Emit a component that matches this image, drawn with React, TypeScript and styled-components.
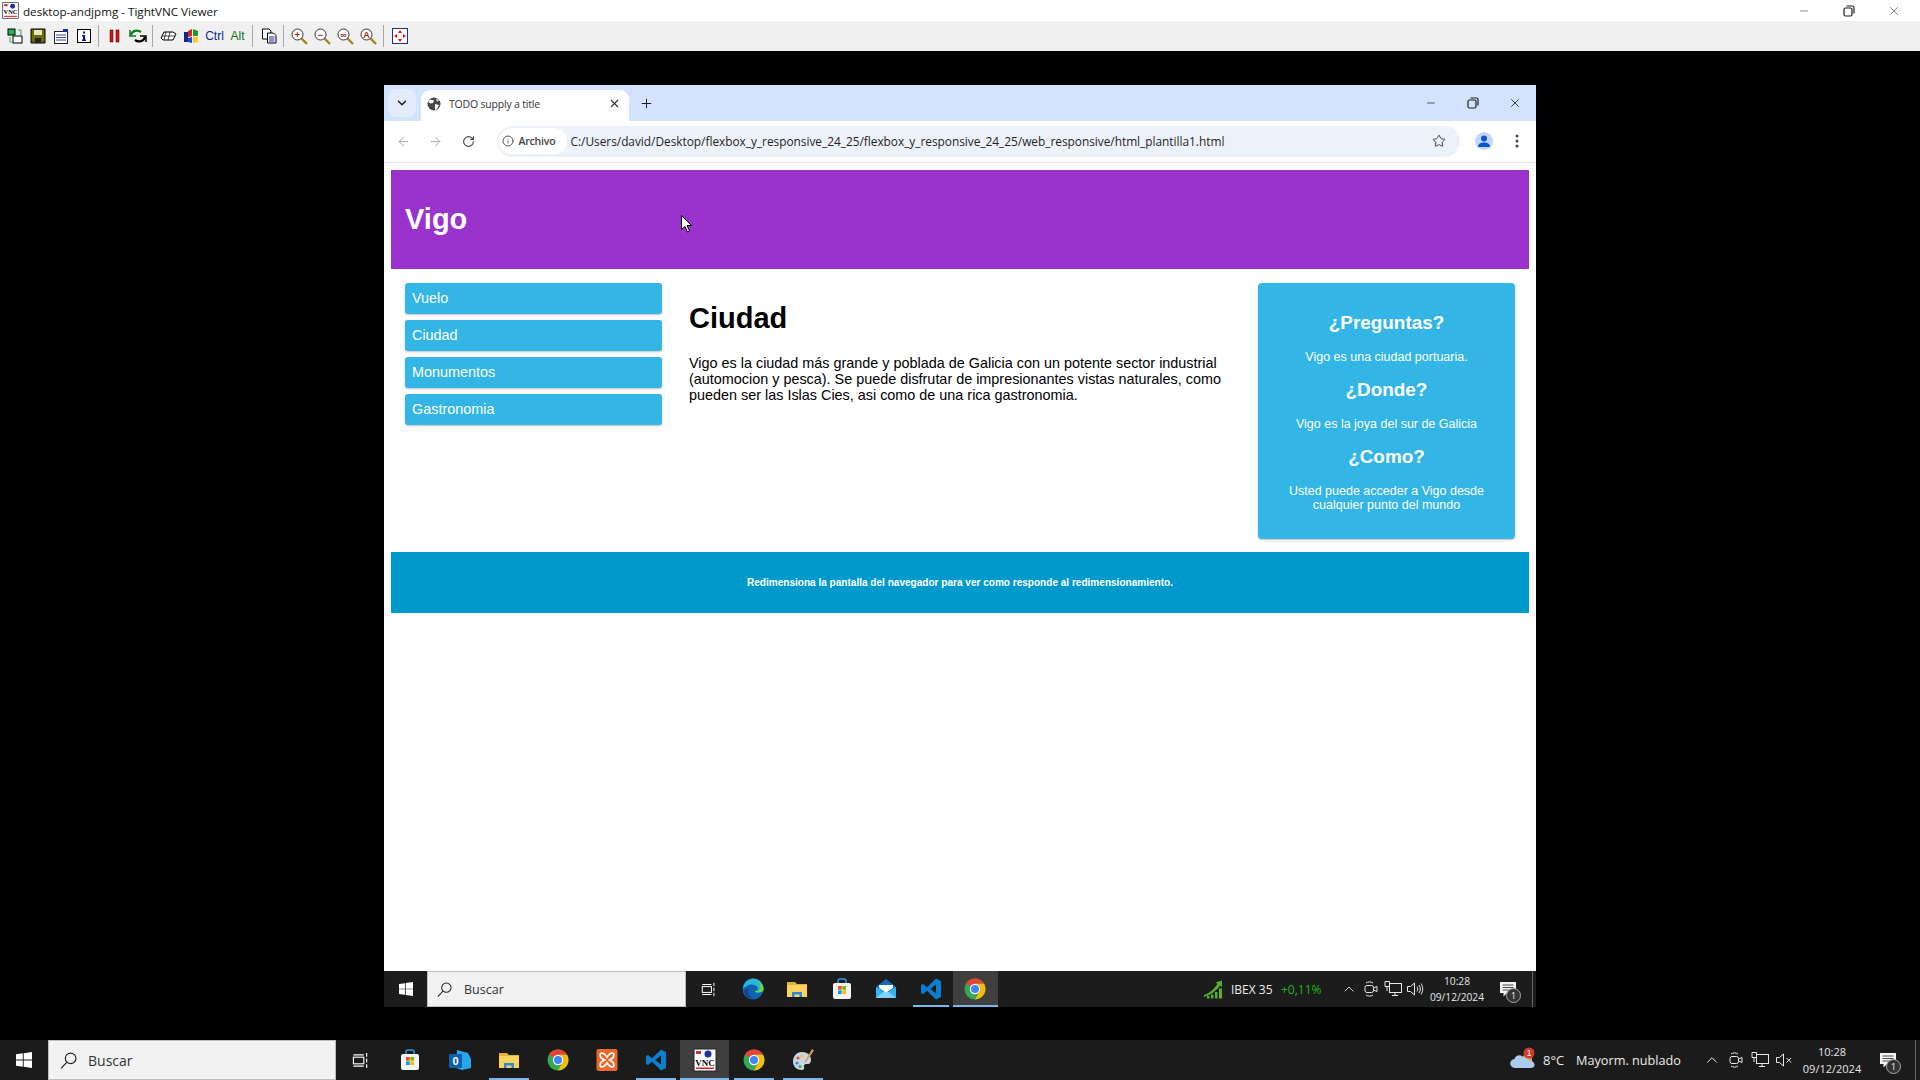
import React from "react";
import styled, { createGlobalStyle } from "styled-components";
import { ArrowLeft, ArrowRight, ChevronDown, ChevronUp, Info, Minus, Plus, RotateCw, Star, X } from "lucide-react";

const GlobalStyle = createGlobalStyle`
    html, body {
        margin: 0;
        padding: 0;
        background: #000;
    }
    * {
        box-sizing: border-box;
    }
`

const Desktop = styled.div`
    display: flex;
    flex-direction: column;
    width: 1920px;
    height: 1080px;
    overflow: hidden;
    background: #000;
    font-family: "Open Sans", "Noto Sans", sans-serif;
`

/* viewer chrome */
const ViewerTitle = styled.div`
    display: flex;
    align-items: center;
    gap: 4px;
    height: 21px;
    padding-left: 2px;
    background: #fff;
    color: #111;
    font-size: 11.65px;
`
const TitleText = styled.span`
    flex: 1;
    padding-top: 2px;
`
const ViewerButtons = styled.div`
    display: flex;
    padding-right: 4px;
`
const ViewerButton = styled.div`
    display: flex;
    align-items: center;
    justify-content: center;
    width: 45px;
    height: 21px;
    color: #222;
`
const ViewerToolbar = styled.div`
    display: flex;
    align-items: center;
    height: 30px;
    padding-left: 3px;
    background: #f0f0f0;
`
const ToolSlot = styled.div`
    display: flex;
    align-items: center;
    justify-content: center;
    width: 23px;
    height: 24px;
    font-family: "Liberation Sans", sans-serif;
    font-size: 12px;
    color: ${(p: { $color?: string }) => p.$color || "#000"};
`
const ToolSeparator = styled.div`
    width: 1px;
    height: 22px;
    margin: 0 4px 0 3px;
    background: #a8a8a8;
`
const RemoteScreen = styled.div`
    flex: 1;
    min-height: 0;
    display: flex;
    padding: 34px 384px 33px;
    background: #000;
`

/* browser */
const BrowserWindow = styled.div`
    flex: 1;
    display: flex;
    flex-direction: column;
    background: #fff;
`
const TabStrip = styled.div`
    display: flex;
    align-items: flex-end;
    height: 36px;
    padding-left: 4px;
    background: #d3e3fd;
    color: #1f1f1f;
`
const TabSearch = styled.div`
    display: flex;
    align-items: center;
    justify-content: center;
    width: 28px;
    height: 28px;
    margin: 0 5px 4px 0;
    border-radius: 8px;
    background: #e3ecfb;
`
const Tab = styled.div`
    display: flex;
    align-items: center;
    width: 208px;
    height: 31px;
    padding: 0 8px 4px 6px;
    border-radius: 9px 9px 0 0;
    background: #fff;
    font-size: 10.5px;
    letter-spacing: -0.2px;
    color: #333;
`
const TabTitle = styled.span`
    flex: 1;
    margin-left: 8px;
`
const NewTab = styled.div`
    display: flex;
    align-items: center;
    justify-content: center;
    width: 20px;
    height: 31px;
    margin-left: 7px;
    padding-bottom: 4px;
`
const WindowButtons = styled.div`
    display: flex;
    align-items: center;
    align-self: stretch;
    margin-left: auto;
`
const WindowButton = styled.div`
    display: flex;
    align-items: center;
    justify-content: center;
    width: 42px;
    height: 36px;
`
const NavBar = styled.div`
    display: flex;
    align-items: center;
    height: 42px;
    padding: 0 7px 1px 3px;
    border-bottom: 1px solid #e6e6e6;
    background: #fff;
`
const NavButton = styled.div`
    display: flex;
    align-items: center;
    justify-content: center;
    width: 32.5px;
    height: 30px;
    color: ${(p: { $dim?: boolean }) => (p.$dim ? "#a9abad" : "#474747")};
`
const AddressBar = styled.div`
    display: flex;
    align-items: center;
    width: 963px;
    height: 31px;
    margin-left: 12px;
    padding: 0 14px 0 2px;
    border-radius: 16px;
    background: #edf2fa;
    font-size: 12px;
    color: #1f1f1f;
`
const SecurityChip = styled.div`
    display: flex;
    align-items: center;
    gap: 5px;
    width: 68px;
    height: 26px;
    padding-left: 3px;
    border-radius: 13px;
    background: #fff;
    font-size: 10.5px;
    font-weight: 600;
    letter-spacing: -0.2px;
    color: #444;
`
const UrlText = styled.span`
    flex: 1;
    margin-left: 4px;
    font-size: 11.88px;
    letter-spacing: -0.02px;
    white-space: nowrap;
`
const Avatar = styled.div`
    display: flex;
    align-items: center;
    justify-content: center;
    width: 18px;
    height: 18px;
    margin-left: 15px;
    border-radius: 50%;
    background: #c2d7f8;
`
const MenuDots = styled.div`
    display: flex;
    justify-content: center;
    margin-left: 15px;
    width: 18px;
    color: #444;
`

/* the page inside the browser */
const Page = styled.div`
    position: relative;
    flex: 1;
    min-height: 0;
    padding: 7px 7px 0 7px;
    background: #fff;
    font-family: "Liberation Sans", Arial, sans-serif;
`
const PageHeader = styled.header`
    display: flex;
    align-items: center;
    height: 99px;
    padding-left: 14px;
    background: #9933cc;
    color: #fff;
`
const SiteTitle = styled.h1`
    margin: 0;
    font-size: 29px;
    font-weight: bold;
`
const Columns = styled.div`
    display: grid;
    grid-template-columns: 257px 1fr 257px;
    column-gap: 27px;
    padding: 14px 14px 0 14px;
`
const SideNav = styled.nav`
    display: flex;
    flex-direction: column;
    gap: 6px;
`
const NavItem = styled.div`
    display: flex;
    align-items: center;
    height: 31px;
    padding: 0 0 2px 7px;
    border-radius: 3px;
    background: #33b5e5;
    box-shadow: 0 1px 2px rgba(0, 0, 0, 0.24);
    color: #fff;
    font-size: 14.4px;
`
const MainText = styled.main`
    padding-top: 18px;
`
const Heading = styled.h2`
    margin: 0 0 20px;
    font-size: 29px;
    line-height: 34px;
    font-weight: bold;
    color: #000;
`
const BodyText = styled.p`
    margin: 0;
    font-size: 14.4px;
    line-height: 16px;
    color: #000;
`
const InfoBox = styled.aside`
    height: 256px;
    padding: 29px 20px 0;
    border-radius: 4px;
    background: #33b5e5;
    box-shadow: 0 1px 2px rgba(0, 0, 0, 0.24);
    color: #fff;
    text-align: center;
`
const InfoHeading = styled.h3`
    margin: 0 0 16px;
    font-size: 18.9px;
    line-height: 22px;
    font-weight: bold;
`
const InfoText = styled.p`
    margin: 0 0 15px;
    font-size: 12.5px;
    line-height: 14px;
`
const PageFooter = styled.footer`
    display: flex;
    align-items: center;
    justify-content: center;
    height: 61px;
    margin-top: 13px;
    background: #0099cc;
    color: #fff;
    font-size: 10.05px;
    font-weight: bold;
`
const PointerSlot = styled.div`
    position: absolute;
    left: 297px;
    top: 52px;
`

/* the two windows taskbars */
const Taskbar = styled.div`
    display: flex;
    align-items: stretch;
    flex: none;
    height: ${(p: { $outer?: boolean }) => (p.$outer ? "40px" : "36px")};
    background: ${(p: { $outer?: boolean }) => (p.$outer ? "#1b1b1b" : "#1c1c1c")};
    color: #fff;
`
const StartButton = styled.div`
    display: flex;
    align-items: center;
    justify-content: center;
    flex: none;
    width: ${(p: { $outer?: boolean }) => (p.$outer ? "48px" : "43px")};
`
const SearchBox = styled.div`
    display: flex;
    align-items: center;
    flex: none;
    width: ${(p: { $outer?: boolean }) => (p.$outer ? "288px" : "259px")};
    padding-left: ${(p: { $outer?: boolean }) => (p.$outer ? "11px" : "9px")};
    gap: ${(p: { $outer?: boolean }) => (p.$outer ? "11px" : "12px")};
    border: 1px solid #bdbdbd;
    background: #f2f2f2;
    color: #333;
    font-size: ${(p: { $outer?: boolean }) => (p.$outer ? "14px" : "12.5px")};
`
const AppSlot = styled.div<{ $width: number; $active?: boolean; $open?: boolean }>`
    position: relative;
    display: flex;
    align-items: center;
    justify-content: center;
    flex: none;
    width: ${(p) => p.$width}px;
    background: ${(p) => (p.$active ? "#3f3f3f" : "transparent")};
    &::after {
        content: "";
        display: ${(p) => (p.$open ? "block" : "none")};
        position: absolute;
        bottom: 0;
        left: ${(p) => (p.$active ? "0" : "4.5px")};
        right: ${(p) => (p.$active ? "0" : "4.5px")};
        height: 2px;
        background: #76b9ed;
    }
`
const Tray = styled.div`
    display: flex;
    align-items: center;
    margin-left: auto;
    color: #ededed;
`
const TrayText = styled.span<{ $color?: string; $size: number; $width?: number }>`
    width: ${(p) => (p.$width ? p.$width + "px" : "auto")};
    color: ${(p) => p.$color || "#ededed"};
    font-size: ${(p) => p.$size}px;
    white-space: nowrap;
`
const TrayIcon = styled.div`
    display: flex;
    align-items: center;
    justify-content: center;
    flex: none;
    width: ${(p: { $width?: number }) => p.$width || 22}px;
`
const Clock = styled.div<{ $size: number; $width: number; $line: number }>`
    display: flex;
    flex-direction: column;
    align-items: center;
    flex: none;
    font-size: ${(p) => p.$size}px;
    line-height: ${(p) => p.$line}px;
    width: ${(p) => p.$width}px;
    color: #e6e6e6;
`
const NotifySlot = styled.div`
    position: relative;
    display: flex;
    align-items: center;
    justify-content: center;
    flex: none;
    width: 40px;
    height: 100%;
    margin-right: ${(p: { $right: number }) => p.$right}px;
`
const NotifyBadge = styled.div`
    position: absolute;
    left: 50%;
    top: 50%;
    display: flex;
    align-items: center;
    justify-content: center;
    width: 15px;
    height: 15px;
    margin: -1px 0 0 -2px;
    border: 1.5px solid #aaa;
    border-radius: 50%;
    background: #333;
    color: #eee;
    font-size: 9.5px;
`
const ShowDesktop = styled.div`
    flex: none;
    width: 1px;
    height: 100%;
    margin-right: ${(p: { $right: number }) => p.$right}px;
    background: #666;
`

/* drawings */
const SlimIcon = ({ children, size = 16, color = "none" }: { children: React.ReactNode; size?: number; color?: string }) => (
    <svg width={size} height={size} viewBox="0 0 24 24" fill={color}>
        {children}
    </svg>
)
const ChromeIcon = ({ size = 24 }: { size?: number }) => (
    <SlimIcon size={size}>
        <circle cx="12" cy="12" r="10.5" fill="#34a853" />
        <path d="M12 1.5A10.5 10.5 0 0 1 21.1 6.8H12A5.2 5.2 0 0 0 7.5 9.4L3 6.6A10.5 10.5 0 0 1 12 1.5Z" fill="#ea4335" />
        <path d="M21.1 6.8A10.5 10.5 0 0 1 12 22.5L16.5 14.6A5.2 5.2 0 0 0 12 6.8Z" fill="#fbbc04" />
        <circle cx="12" cy="12" r="5.2" fill="#fff" />
        <circle cx="12" cy="12" r="4" fill="#4285f4" />
    </SlimIcon>
)
const VsCodeIcon = ({ size = 24 }: { size?: number }) => (
    <SlimIcon size={size}>
        <path fillRule="evenodd" d="M17 1.5L22 4V20L17 22.5L8 13.8L4 17L2 16V8L4 7L8 10.2ZM17 7.5L11.2 12L17 16.5Z" fill="#0a7fd0" />
    </SlimIcon>
)
const EdgeIcon = () => (
    <SlimIcon size={24}>
        <circle cx="12" cy="12" r="10.5" fill="#0e63b3" />
        <path d="M2 11C3 5 7.500 1.500 12 1.500C18 1.500 22.500 6 22.500 12.500C22.500 14.500 20 15.500 17 15.500C15 15.500 14 15 14 14C17 14 17.500 11.500 16.500 10C15 7.500 9 6.500 6 9C4 10.500 2.500 11 2 11Z" fill="#2ab6d8" />
        <path d="M22.500 12.500C22.500 8 19 4.500 16 3.500C19 5.500 20 9 19 12C18.500 13.500 16.500 14.500 14 14C14 15 15 15.500 17 15.500C20 15.500 22.500 14.500 22.500 12.500Z" fill="#6dd63e" />
        <path d="M8 12C6 15 8 20 12 21.500C8 21.500 4 19 3 14C4.500 12 6.500 11.500 8 12Z" fill="#1a3f8f" />
    </SlimIcon>
)
const FolderIcon = () => (
    <SlimIcon size={24}>
        <path d="M2 5H10L12 7H22V20H2Z" fill="#e7b23a" />
        <path d="M2 8H22V20H2Z" fill="#fbd460" />
        <path d="M7 20V15H17V20H14.500V17.500H9.500V20Z" fill="#2e8ad8" />
    </SlimIcon>
)
const StoreIcon = () => (
    <SlimIcon size={24}>
        <path d="M8 7V4A2 2 0 0 1 10 2H14A2 2 0 0 1 16 4V7" stroke="#2f9ae0" strokeWidth="1.500" />
        <rect x="3" y="6" width="18" height="16" rx="2" fill="#f4f4f4" />
        <rect x="8" y="9" width="3.700" height="3.700" fill="#f25022" />
        <rect x="12.300" y="9" width="3.700" height="3.700" fill="#7fba00" />
        <rect x="8" y="13.300" width="3.700" height="3.700" fill="#00a4ef" />
        <rect x="12.300" y="13.300" width="3.700" height="3.700" fill="#ffb900" />
    </SlimIcon>
)
const MailIcon = () => (
    <SlimIcon size={24}>
        <path d="M12 2L22 10V21H2V10Z" fill="#0f6cbd" />
        <path d="M2 10L12 16L22 10V21H2Z" fill="#33b5f5" />
        <path d="M2 21L12 13L22 21Z" fill="#7fd2fa" />
        <path d="M5 8H19V11L12 15.500L5 11Z" fill="#fff" />
    </SlimIcon>
)
const OutlookIcon = () => (
    <SlimIcon size={24}>
        <path d="M9 2L20 5L23 11V20L14 22L8 20Z" fill="#28a8ea" />
        <rect x="1" y="6" width="13" height="14" rx="1" fill="#0f5fb0" />
        <text x="7.500" y="17" textAnchor="middle" fontSize="11" fontFamily="Liberation Sans" fontWeight="bold" fill="#fff">0</text>
    </SlimIcon>
)
const XamppIcon = () => (
    <SlimIcon size={24}>
        <rect x="1.500" y="1" width="21" height="22" rx="2" fill="#e8692a" />
        <path d="M7 5C4.500 5 4.500 9 7 10.500L9.500 12L7 13.500C4.500 15 4.500 19 7 19C9 19 10.500 17 12 15C13.500 17 15 19 17 19C19.500 19 19.500 15 17 13.500L14.500 12L17 10.500C19.500 9 19.500 5 17 5C15 5 13.500 7 12 9C10.500 7 9 5 7 5Z" fill="none" stroke="#fff" strokeWidth="1.700" />
    </SlimIcon>
)
const VncIcon = ({ size = 24 }: { size?: number }) => (
    <svg width={size} height={size} viewBox="0 0 24 24">
        <rect x="1" y="1" width="22" height="22" fill="#fff" stroke="#222" />
        <rect x="3" y="3" width="5" height="3" fill="#c33" />
        <circle cx="15" cy="6" r="3.500" fill="#1a2fa0" />
        <text x="12" y="17.500" textAnchor="middle" fontSize="9" fontFamily="Liberation Serif" fontWeight="bold" fill="#000">VNC</text>
        <rect x="3" y="19.500" width="18" height="1.500" fill="#d22" />
    </svg>
)
const PaintIcon = () => (
    <SlimIcon size={24}>
        <path d="M11 4C5 4 2 9 2 13.500C2 18.500 6 22 11 22C13 22 13.500 20.500 13 19C12.500 17.500 13.500 16 15 16H17C19 16 20 14 20 11.500C20 7 16 4 11 4Z" fill="#c9d6e4" />
        <circle cx="7" cy="10" r="1.600" fill="#e04a3a" />
        <circle cx="11" cy="8" r="1.600" fill="#f2c230" />
        <circle cx="6" cy="15" r="1.600" fill="#3a86e0" />
        <circle cx="9" cy="18.500" r="1.600" fill="#3ab45a" />
        <path d="M21 1L23 2.500L15 14L13 15Z" fill="#d99a4a" />
    </SlimIcon>
)
const WindowsLogo = ({ size }: { size: number }) => (
    <svg width={size} height={size} viewBox="0 0 16 16" fill="#fff">
        <path d="M0 2.300L6.800 1.300V7.600H0ZM7.700 1.200L16 0V7.600H7.700ZM0 8.400H6.800V14.700L0 13.700ZM7.700 8.400H16V16L7.700 14.800Z" />
    </svg>
)
const SearchGlyph = ({ size }: { size: number }) => (
    <svg width={size} height={size} viewBox="0 0 16 16" fill="none" stroke="#222" strokeWidth="1.100">
        <circle cx="10" cy="6" r="5" />
        <path d="M6.300 9.700L1 15.500" />
    </svg>
)
const TaskViewIcon = ({ size }: { size: number }) => (
    <svg width={size} height={size} viewBox="0 0 18 18" fill="none" stroke="#fff" strokeWidth="1.200">
        <rect x="1.500" y="5.500" width="11" height="7" />
        <path d="M1.500 3H12.500M1.500 15H12.500M15.500 1V5M15.500 7V11M15.500 13V17" />
    </svg>
)
const MeetIcon = () => (
    <svg width="18" height="18" viewBox="0 0 18 18" fill="none" stroke="#e8e8e8" strokeWidth="1">
        <rect x="3" y="5.500" width="8.500" height="7" rx="2" />
        <path d="M11.500 8L15 6.500V11.500L11.500 10M4 3C6 1.500 9 1.500 11 3M4 15C6 16.500 9 16.500 11 15" />
    </svg>
)
const NetworkIcon = () => (
    <svg width="18" height="18" viewBox="0 0 18 18" fill="none" stroke="#e8e8e8" strokeWidth="1">
        <rect x="5.500" y="3.500" width="12" height="9" />
        <path d="M11 12.500V15.500M8 15.500H14M1 1.500H5.500V6.500H1ZM3 6.500V11" />
    </svg>
)
const VolumeIcon = ({ muted }: { muted?: boolean }) => (
    <svg width="18" height="18" viewBox="0 0 18 18" fill="none" stroke="#e8e8e8" strokeWidth="1">
        <path d="M1.500 6.500H4.500L8.500 3V15L4.500 11.500H1.500Z" />
        {muted ? (
            <path d="M11.500 7L16 11.500M16 7L11.500 11.500" />
        ) : (
            <path d="M11 6.500C12 8 12 10 11 11.500M13 5C14.800 7.500 14.800 10.500 13 13M15 3.500C17.300 7 17.300 11 15 14.500" />
        )}
    </svg>
)
const NotifyBubble = () => (
    <svg width="18" height="18" viewBox="0 0 18 18" fill="#f4f4f4">
        <path d="M1 2H17V13H8L4.500 16.500V13H1Z" />
        <path d="M3.500 5H14.500M3.500 7.500H14.500M3.500 10H11" stroke="#333" strokeWidth="0.900" />
    </svg>
)
const ChartIcon = () => (
    <svg width="20" height="20" viewBox="0 0 20 20">
        <path d="M1 16C7 14 11 10 14.500 5L12.500 3.500L19 1.500L19 8L17 6.500C14 11 8 16 1 18Z" fill="#59b02a" />
        <rect x="4" y="17" width="2.500" height="2.500" fill="#59b02a" />
        <rect x="8" y="15.500" width="2.500" height="4" fill="#59b02a" />
        <rect x="12" y="13" width="2.500" height="6.500" fill="#59b02a" />
        <rect x="16" y="9.500" width="3" height="10" fill="#59b02a" />
    </svg>
)
const CloudIcon = () => (
    <svg width="26" height="26" viewBox="0 0 26 26">
        <path d="M13 9A6 6 0 0 1 22 9V16H13Z" fill="#f0a030" />
        <path d="M5 21A4.500 4.500 0 0 1 4.500 12C5.500 8 11 7 13.500 10.500C16 9.500 19 11 19 13.500C22.500 13.500 25 16 24.500 18.500C24.200 20 23 21 21 21Z" fill="#a8cbee" />
        <circle cx="19" cy="6" r="5.500" fill="#d13a2e" />
        <text x="19" y="9" textAnchor="middle" fontSize="8.500" fontFamily="Liberation Sans" fill="#fff">1</text>
    </svg>
)
const GlobeIcon = () => (
    <svg width="14" height="14" viewBox="0 0 14 14">
        <circle cx="7" cy="7" r="6.500" fill="#474747" />
        <path d="M3 2.500L7 3.500L6 6L3.500 6.500L1 5ZM8 7L12 8L10 12L8 13ZM9 1.500L12 3.500L10 4.500Z" fill="#fff" />
    </svg>
)
const PersonIcon = () => (
    <svg width="14" height="14" viewBox="0 0 14 14" fill="#0b57d0">
        <circle cx="7" cy="4.500" r="3" />
        <path d="M1 13C1 9.500 4 8.500 7 8.500C10 8.500 13 9.500 13 13Z" />
    </svg>
)
const RestoreIcon = () => (
    <svg width="12" height="12" viewBox="0 0 12 12" fill="none" stroke="#1f1f1f" strokeWidth="1.200">
        <rect x="1" y="3" width="8" height="8" rx="1.500" />
        <path d="M3.500 1H9.500A1.500 1.500 0 0 1 11 2.500V8.500" />
    </svg>
)
const Pointer = () => (
    <svg width="11" height="18" viewBox="0 0 11 18">
        <path d="M0.500 0.500V14.500L4 11.500L6.500 17L8.500 16L6 10.500H10.500Z" fill="#fff" stroke="#000" strokeWidth="1" />
    </svg>
)
const ThreeDots = () => (
    <svg width="4" height="14" viewBox="0 0 4 14" fill="#444">
        <circle cx="2" cy="2" r="1.500" />
        <circle cx="2" cy="7" r="1.500" />
        <circle cx="2" cy="12" r="1.500" />
    </svg>
)

/* small viewer toolbar drawings */
const ToolIcon = ({ kind }: { kind: string }) => {
    if (kind === "conn") return <svg width="16" height="16" viewBox="0 0 16 16"><rect x="1" y="1" width="7" height="6" fill="#2bb24c" stroke="#000" /><rect x="6" y="8" width="9" height="7" fill="#fff" stroke="#000" /><path d="M11 2H14V7M3 9V14H5" fill="none" stroke="#2bb24c" /></svg>
    if (kind === "save") return <svg width="16" height="16" viewBox="0 0 16 16"><path d="M1 1H15V15H1Z" fill="#6b6b00" stroke="#000" /><rect x="4" y="2" width="8" height="5" fill="#e8e8c0" /><rect x="5" y="10" width="6" height="5" fill="#222" /></svg>
    if (kind === "opts") return <svg width="16" height="16" viewBox="0 0 16 16"><rect x="1.500" y="3.500" width="13" height="12" fill="#fff" stroke="#223" /><rect x="10" y="1" width="5" height="3" fill="#1a2f8f" /><path d="M3 7H13M3 9.500H13M3 12H13" stroke="#334a9a" /></svg>
    if (kind === "info") return <svg width="16" height="16" viewBox="0 0 16 16"><rect x="1.500" y="1.500" width="13" height="13" fill="#fff" stroke="#000" /><path d="M7 3.500H9V5.500H7ZM6 7H9V11.500H10V13H6V11.500H7V8.500H6Z" fill="#14148c" /></svg>
    if (kind === "pause") return <svg width="16" height="16" viewBox="0 0 16 16"><rect x="3" y="2" width="3" height="12" fill="#d11" stroke="#300" strokeWidth="0.500" /><rect x="9" y="2" width="3" height="12" fill="#d11" stroke="#300" strokeWidth="0.500" /></svg>
    if (kind === "refresh") return <svg width="18" height="16" viewBox="0 0 18 16" fill="none" strokeWidth="2.200"><path d="M2 7C3 3 8 1 12 4" stroke="#0d7a20" /><path d="M1 2V8H7" stroke="#0d7a20" strokeWidth="1.500" /><path d="M16 9C15 13 10 15 6 12" stroke="#000" /><path d="M17 14V8H11" stroke="#000" strokeWidth="1.500" /></svg>
    if (kind === "keys") return <svg width="17" height="14" viewBox="0 0 17 14"><path d="M4 3H13L16 5L13 11H3L1 9Z" fill="#fff" stroke="#000" /><path d="M6 3L4 11M10 3L8 11M2 7H15" stroke="#000" strokeWidth="0.700" /></svg>
    if (kind === "win") return <svg width="17" height="16" viewBox="0 0 17 16"><path d="M1 4H5V14H1Z" fill="#0b2a80" /><path d="M5 3L9 1V8L5 9Z" fill="#d22" /><path d="M10 1L15 3V8L10 8Z" fill="#1a9a2a" /><path d="M5 10L9 9V15L5 14Z" fill="#1d4bd0" /><path d="M10 9L15 9V14L10 15Z" fill="#f2d21c" /></svg>
    if (kind === "copy") return <svg width="16" height="16" viewBox="0 0 16 16" fill="#fff" stroke="#000"><path d="M1.500 1H8L10 3V11H1.500Z" /><path d="M6.500 5H12.500L15 7.500V15H6.500Z" /><path d="M8 9H13.500M8 11H13.500M8 13H13.500" stroke="#1a2f8f" /></svg>
    if (kind === "fit") return <svg width="16" height="16" viewBox="0 0 16 16"><rect x="0.500" y="0.500" width="15" height="15" fill="#fff" stroke="#1a2f8f" /><path d="M8 2L10 5H6ZM8 14L6 11H10ZM2 8L5 6V10ZM14 8L11 10V6Z" fill="#d11" /></svg>
    const mark = kind === "plus" ? "+" : kind === "minus" ? "−" : kind === "hundred" ? "∞" : "A"
    return (
        <svg width="17" height="17" viewBox="0 0 17 17">
            <path d="M10 10L16 16" stroke="#a08820" strokeWidth="2.400" />
            <circle cx="6.500" cy="6.500" r="5.500" fill="#fff" stroke="#333" />
            <text x="6.500" y="10" textAnchor="middle" fontSize="9" fontFamily="Liberation Sans" fontWeight="bold" fill="#a01818">{mark}</text>
        </svg>
    )
}

const sideLinks = ["Vuelo", "Ciudad", "Monumentos", "Gastronomia"]
const infoBlocks = [
    { title: "¿Preguntas?", text: "Vigo es una ciudad portuaria." },
    { title: "¿Donde?", text: "Vigo es la joya del sur de Galicia" },
    { title: "¿Como?", text: "Usted puede acceder a Vigo desde cualquier punto del mundo" },
]

const App = () => {
    return (
        <Desktop>
            <GlobalStyle />
            <ViewerTitle>
                <VncIcon size={17} />
                <TitleText>desktop-andjpmg - TightVNC Viewer</TitleText>
                <ViewerButtons>
                    <ViewerButton><Minus size={12} strokeWidth={1} /></ViewerButton>
                    <ViewerButton><RestoreIcon /></ViewerButton>
                    <ViewerButton><X size={14} strokeWidth={1} /></ViewerButton>
                </ViewerButtons>
            </ViewerTitle>
            <ViewerToolbar>
                <ToolSlot><ToolIcon kind="conn" /></ToolSlot>
                <ToolSlot><ToolIcon kind="save" /></ToolSlot>
                <ToolSlot><ToolIcon kind="opts" /></ToolSlot>
                <ToolSlot><ToolIcon kind="info" /></ToolSlot>
                <ToolSeparator />
                <ToolSlot><ToolIcon kind="pause" /></ToolSlot>
                <ToolSlot><ToolIcon kind="refresh" /></ToolSlot>
                <ToolSeparator />
                <ToolSlot><ToolIcon kind="keys" /></ToolSlot>
                <ToolSlot><ToolIcon kind="win" /></ToolSlot>
                <ToolSlot $color="#0b1c9c">Ctrl</ToolSlot>
                <ToolSlot $color="#0b7a16">Alt</ToolSlot>
                <ToolSeparator />
                <ToolSlot><ToolIcon kind="copy" /></ToolSlot>
                <ToolSeparator />
                <ToolSlot><ToolIcon kind="plus" /></ToolSlot>
                <ToolSlot><ToolIcon kind="minus" /></ToolSlot>
                <ToolSlot><ToolIcon kind="hundred" /></ToolSlot>
                <ToolSlot><ToolIcon kind="auto" /></ToolSlot>
                <ToolSeparator />
                <ToolSlot><ToolIcon kind="fit" /></ToolSlot>
            </ViewerToolbar>

            <RemoteScreen>
                <BrowserWindow>
                    <TabStrip>
                        <TabSearch><ChevronDown size={14} strokeWidth={2.5} /></TabSearch>
                        <Tab>
                            <GlobeIcon />
                            <TabTitle>TODO supply a title</TabTitle>
                            <X size={13} strokeWidth={2} />
                        </Tab>
                        <NewTab><Plus size={15} strokeWidth={1.6} /></NewTab>
                        <WindowButtons>
                            <WindowButton><Minus size={12} strokeWidth={1.4} /></WindowButton>
                            <WindowButton><RestoreIcon /></WindowButton>
                            <WindowButton><X size={14} strokeWidth={1.4} /></WindowButton>
                        </WindowButtons>
                    </TabStrip>
                    <NavBar>
                        <NavButton $dim><ArrowLeft size={15} strokeWidth={1.6} /></NavButton>
                        <NavButton $dim><ArrowRight size={15} strokeWidth={1.6} /></NavButton>
                        <NavButton><RotateCw size={13} strokeWidth={2} /></NavButton>
                        <AddressBar>
                            <SecurityChip>
                                <Info size={12} strokeWidth={1.8} />
                                Archivo
                            </SecurityChip>
                            <UrlText>C:/Users/david/Desktop/flexbox_y_responsive_24_25/flexbox_y_responsive_24_25/web_responsive/html_plantilla1.html</UrlText>
                            <Star size={14} strokeWidth={1.7} color="#444" />
                        </AddressBar>
                        <Avatar><PersonIcon /></Avatar>
                        <MenuDots><ThreeDots /></MenuDots>
                    </NavBar>
                    <Page>
                        <PageHeader>
                            <SiteTitle>Vigo</SiteTitle>
                        </PageHeader>
                        <Columns>
                            <SideNav>
                                {sideLinks.map((link) => (
                                    <NavItem key={link}>{link}</NavItem>
                                ))}
                            </SideNav>
                            <MainText>
                                <Heading>Ciudad</Heading>
                                <BodyText>
                                    Vigo es la ciudad más grande y poblada de Galicia con un potente sector industrial (automocion y pesca). Se puede disfrutar de impresionantes vistas naturales, como pueden ser las Islas Cies, asi como de una rica gastronomia.
                                </BodyText>
                            </MainText>
                            <InfoBox>
                                {infoBlocks.map((block) => (
                                    <div key={block.title}>
                                        <InfoHeading>{block.title}</InfoHeading>
                                        <InfoText>{block.text}</InfoText>
                                    </div>
                                ))}
                            </InfoBox>
                        </Columns>
                        <PageFooter>Redimensiona la pantalla del navegador para ver como responde al redimensionamiento.</PageFooter>
                        <PointerSlot><Pointer /></PointerSlot>
                    </Page>
                    <Taskbar>
                        <StartButton><WindowsLogo size={14} /></StartButton>
                        <SearchBox>
                            <SearchGlyph size={15} />
                            Buscar
                        </SearchBox>
                        <AppSlot $width={44.5}><TaskViewIcon size={15} /></AppSlot>
                        <AppSlot $width={44.5}><EdgeIcon /></AppSlot>
                        <AppSlot $width={44.5}><FolderIcon /></AppSlot>
                        <AppSlot $width={44.5}><StoreIcon /></AppSlot>
                        <AppSlot $width={44.5}><MailIcon /></AppSlot>
                        <AppSlot $width={44.5} $open><VsCodeIcon /></AppSlot>
                        <AppSlot $width={44.5} $active $open><ChromeIcon /></AppSlot>
                        <Tray>
                            <TrayIcon $width={36}><ChartIcon /></TrayIcon>
                            <TrayText $size={12} $width={50}>IBEX 35</TrayText>
                            <TrayText $size={12} $color="#14b814" $width={57}>+0,11%</TrayText>
                            <TrayIcon $width={22}><ChevronUp size={16} strokeWidth={1.3} /></TrayIcon>
                            <TrayIcon><MeetIcon /></TrayIcon>
                            <TrayIcon><NetworkIcon /></TrayIcon>
                            <TrayIcon><VolumeIcon /></TrayIcon>
                            <Clock $size={10.2} $width={62} $line={16}>
                                <span>10:28</span>
                                <span>09/12/2024</span>
                            </Clock>
                            <NotifySlot $right={4}>
                                <NotifyBubble />
                                <NotifyBadge>1</NotifyBadge>
                            </NotifySlot>
                            <ShowDesktop $right={3} />
                        </Tray>
                    </Taskbar>
                </BrowserWindow>
            </RemoteScreen>

            <Taskbar $outer>
                <StartButton $outer><WindowsLogo size={16} /></StartButton>
                <SearchBox $outer>
                    <SearchGlyph size={17} />
                    Buscar
                </SearchBox>
                <AppSlot $width={49}><TaskViewIcon size={17} /></AppSlot>
                <AppSlot $width={50}><StoreIcon /></AppSlot>
                <AppSlot $width={49}><OutlookIcon /></AppSlot>
                <AppSlot $width={49} $open><FolderIcon /></AppSlot>
                <AppSlot $width={49}><ChromeIcon /></AppSlot>
                <AppSlot $width={49}><XamppIcon /></AppSlot>
                <AppSlot $width={49} $open><VsCodeIcon /></AppSlot>
                <AppSlot $width={49} $active $open><VncIcon /></AppSlot>
                <AppSlot $width={49} $open><ChromeIcon /></AppSlot>
                <AppSlot $width={49} $open><PaintIcon /></AppSlot>
                <Tray>
                    <TrayIcon $width={40}><CloudIcon /></TrayIcon>
                    <TrayText $size={13} $width={33}>8°C</TrayText>
                    <TrayText $size={12.7} $width={124}>Mayorm. nublado</TrayText>
                    <TrayIcon $width={24}><ChevronUp size={18} strokeWidth={1.3} /></TrayIcon>
                    <TrayIcon $width={24}><MeetIcon /></TrayIcon>
                    <TrayIcon $width={24}><NetworkIcon /></TrayIcon>
                    <TrayIcon $width={24}><VolumeIcon muted /></TrayIcon>
                    <Clock $size={11} $width={72} $line={17.5}>
                        <span>10:28</span>
                        <span>09/12/2024</span>
                    </Clock>
                    <NotifySlot $right={7}>
                        <NotifyBubble />
                        <NotifyBadge>1</NotifyBadge>
                    </NotifySlot>
                    <ShowDesktop $right={4} />
                </Tray>
            </Taskbar>
        </Desktop>
    )
}

export default App
